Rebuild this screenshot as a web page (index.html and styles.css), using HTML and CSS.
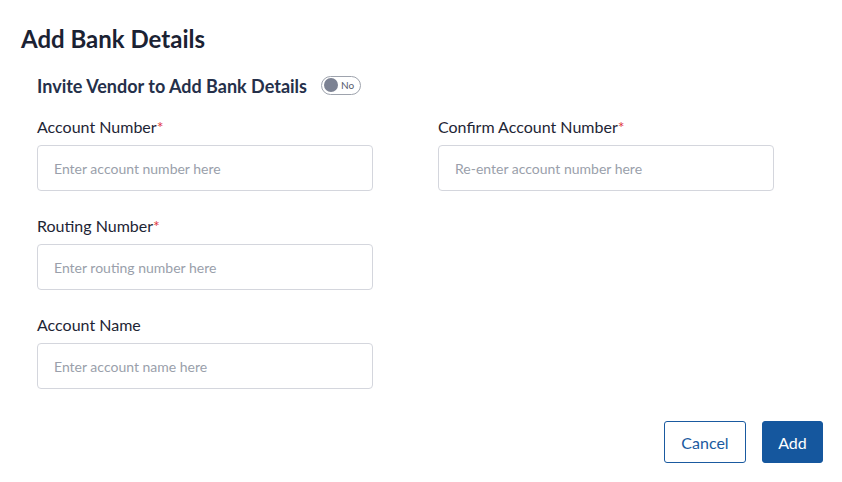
FILE: index.html
```html
<!DOCTYPE html>
<html>
<head>
<meta charset="utf-8">
<link rel="stylesheet" href="styles.css">
</head>
<body>
<div class="page">
  <h1 class="title">Add Bank Details</h1>
  <div class="form">
    <div class="invite">
      <span class="invite-text">Invite Vendor to Add Bank Details</span>
      <span class="toggle"><span class="knob"></span><span class="toggle-label">No</span></span>
    </div>
    <div class="grid">
      <div class="field">
        <label class="label">Account Number<span class="req">*</span></label>
        <div class="input">Enter account number here</div>
      </div>
      <div class="field">
        <label class="label">Confirm Account Number<span class="req">*</span></label>
        <div class="input">Re-enter account number here</div>
      </div>
      <div class="field">
        <label class="label">Routing Number<span class="req">*</span></label>
        <div class="input">Enter routing number here</div>
      </div>
      <div class="field empty"></div>
      <div class="field">
        <label class="label">Account Name</label>
        <div class="input">Enter account name here</div>
      </div>
    </div>
  </div>
  <div class="actions">
    <button class="btn btn-outline">Cancel</button>
    <button class="btn btn-primary">Add</button>
  </div>
</div>
</body>
</html>
```
FILE: styles.css
```css
* { box-sizing: border-box; }
html, body { margin: 0; padding: 0; background: #ffffff; }
body { font-family: Lato, "Noto Sans", sans-serif; color: #1e2535; }
.page { width: 842px; height: 482px; padding: 24px 19px 0 21px; }
.title { margin: 0; font-size: 24px; font-weight: 700; line-height: 30px; color: #1b2233; }
.form { padding-left: 16px; margin-top: 20px; }
.invite { display: flex; align-items: center; gap: 14px; height: 24px; }
.invite-text { font-size: 18px; font-weight: 700; color: #25304a; line-height: 24px; }
.toggle { display: inline-flex; align-items: center; width: 40px; height: 19px; border: 1px solid #9ea3ad; border-radius: 10px; padding: 0 2px; gap: 3px; margin-top: -2px; }
.knob { width: 14px; height: 14px; border-radius: 50%; background: #7c8293; }
.toggle-label { font-size: 10px; color: #565c6b; line-height: 1; }
.grid { display: grid; grid-template-columns: 336px 336px; column-gap: 65px; row-gap: 25px; margin-top: 19px; }
.field { display: flex; flex-direction: column; gap: 8px; }
.label { font-size: 16px; line-height: 20px; color: #1e2535; }
.req { color: #e0383e; }
.input { height: 46px; border: 1px solid #d4d6dd; border-radius: 4px; padding: 0 16px; display: flex; align-items: center; font-size: 14px; color: #9a9fab; }
.actions { display: flex; justify-content: flex-end; gap: 16px; margin-top: 32px; }
.btn { font-family: Lato, "Noto Sans", sans-serif; font-size: 16px; height: 42px; border-radius: 3px; padding: 0; cursor: pointer; }
.btn-outline { width: 82px; background: #fff; border: 1px solid #1a5aa0; color: #1a5aa0; }
.btn-primary { width: 61px; background: #15579e; border: 1px solid #15579e; color: #fff; }
```
